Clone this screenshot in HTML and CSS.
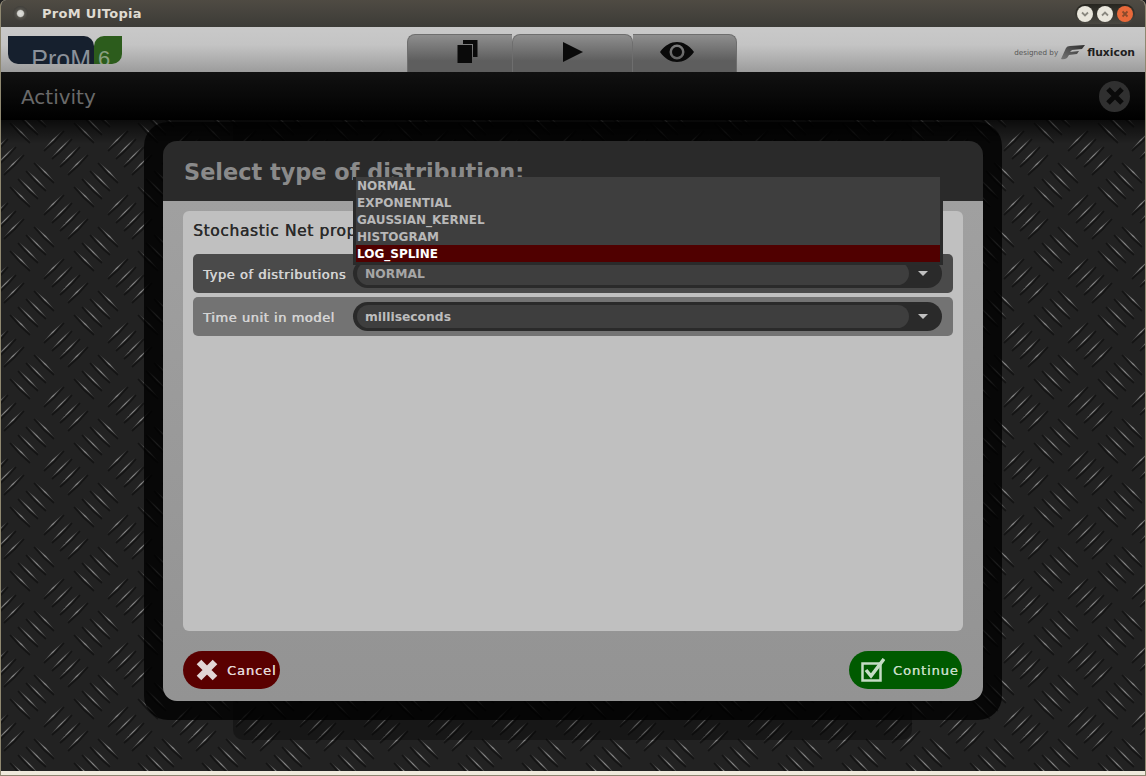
FILE: index.html
```html
<!DOCTYPE html>
<html lang="en">

<head>
    <meta charset="UTF-8">
    <meta name="viewport" content="width=device-width, initial-scale=1.0">
    <title>ProM UITopia</title>
    <link rel="stylesheet" href="styles.css">
</head>

<body>
    <div class="window">
        <header class="titlebar">
            <div class="title-left">
                <span class="app-dot"></span>
                <span class="app-title">ProM UITopia</span>
            </div>
            <div class="win-buttons">
                <span class="win-btn">
                    <svg width="10" height="10" viewBox="0 0 10 10"><path d="M2 3.500 5 6.500 8 3.500" fill="none" stroke="#8a887f" stroke-width="1.800"/></svg>
                </span>
                <span class="win-btn">
                    <svg width="10" height="10" viewBox="0 0 10 10"><path d="M2 6.500 5 3.500 8 6.500" fill="none" stroke="#8a887f" stroke-width="1.800"/></svg>
                </span>
                <span class="win-btn win-close">
                    <svg width="10" height="10" viewBox="0 0 10 10"><path d="M2.500 2.500 7.500 7.500M7.500 2.500 2.500 7.500" fill="none" stroke="#8a4a2c" stroke-width="1.800"/></svg>
                </span>
            </div>
        </header>

        <div class="toolbar">
            <div class="logo">
                <div class="logo-prom"><span>ProM</span></div>
                <div class="logo-six"><span>6</span></div>
            </div>
            <div class="tabs">
                <div class="tab tab-first">
                    <svg width="21" height="23" viewBox="0 0 21 23"><path d="M6 0H20.500V17H16V4H6Z" fill="#0a0a0a"/><path d="M0.500 5H15V23H0.500Z" fill="#0a0a0a"/></svg>
                </div>
                <div class="tab tab-mid">
                    <svg width="22" height="22" viewBox="0 0 22 22"><path d="M1 1 21 11 1 21Z" fill="#0a0a0a"/></svg>
                </div>
                <div class="tab tab-last">
                    <svg width="36" height="22" viewBox="0 0 36 22"><path fill-rule="evenodd" d="M1 11C6 4 12 1 18 1S30 4 35 11C30 18 24 21 18 21S6 18 1 11ZM18 3.500A7.500 7.500 0 1 0 18 18.500 7.500 7.500 0 1 0 18 3.500Z" fill="#0a0a0a"/><circle cx="18" cy="11" r="5" fill="#0a0a0a"/></svg>
                </div>
            </div>
            <div class="brand">
                <span class="brand-by">designed by</span>
                <svg width="24" height="15" viewBox="0 0 24 15">
                    <defs>
                        <linearGradient id="wing" x1="0" y1="1" x2="1" y2="0">
                            <stop offset="0" stop-color="#777"/>
                            <stop offset="1" stop-color="#2c2c2c"/>
                        </linearGradient>
                    </defs>
                    <path d="M0 14 5 3Q6 1 9 1L24 0 21 4 11 5 9 7 18 6 16 9 8 10 6 13Q3 15 0 14Z" fill="url(#wing)"/>
                </svg>
                <span class="brand-name">fluxicon</span>
            </div>
        </div>

        <div class="activity-bar">
            <span class="activity-title">Activity</span>
            <span class="activity-close">
                <svg width="20" height="20" viewBox="0 0 20 20"><path d="M3 3 17 17M17 3 3 17" stroke="#0a0a0a" stroke-width="5"/></svg>
            </span>
        </div>

        <main class="stage">
            <svg class="plate" width="100%" height="100%">
                <defs>
                    <linearGradient id="rib-light" x1="0" y1="1" x2="1" y2="0">
                        <stop offset="0" stop-color="#303030"/>
                        <stop offset="0.5" stop-color="#8c8c8c"/>
                        <stop offset="1" stop-color="#303030"/>
                    </linearGradient>
                    <g id="rib">
                        <path d="M-9 11Q2 2 11-9" fill="none" stroke="#0e0e0e" stroke-width="1.800" opacity="0.7"/>
                        <path d="M-10 10Q0.900 0.900 10-10Q-0.900-0.900-10 10" fill="url(#rib-light)"/>
                    </g>
                    <g id="ribs">
                        <use href="#rib" x="-12" y="-12"/>
                        <use href="#rib" x="-4" y="-4"/>
                        <use href="#rib" x="4" y="4"/>
                        <use href="#rib" x="12" y="12"/>
                    </g>
                    <pattern id="plate-tile" width="64" height="64" patternUnits="userSpaceOnUse">
                        <use href="#ribs" x="64" y="32"/>
                        <use href="#ribs" x="0" y="32"/>
                        <use href="#ribs" x="32" y="0" transform="rotate(90 32 0)"/>
                        <use href="#ribs" x="32" y="64" transform="rotate(90 32 64)"/>
                    </pattern>
                </defs>
                <rect width="100%" height="100%" fill="url(#plate-tile)"/>
            </svg>
            <div class="plate-shade"></div>
            <div class="sheet"></div>

            <div class="frame">
                <section class="dialog">
                    <h1 class="dialog-title">Select type of distribution:</h1>
                    <div class="dialog-body">
                        <div class="panel">
                            <div class="panel-title">Stochastic Net properties</div>
                            <div class="row row-dark">
                                <label class="row-label">Type of distributions</label>
                                <div class="combo">
                                    <div class="combo-value combo-muted">NORMAL</div>
                                    <span class="combo-arrow"></span>
                                </div>
                            </div>
                            <div class="row row-mid">
                                <label class="row-label">Time unit in model</label>
                                <div class="combo">
                                    <div class="combo-value">milliseconds</div>
                                    <span class="combo-arrow"></span>
                                </div>
                            </div>
                        </div>
                        <div class="actions">
                            <button class="btn btn-cancel">
                                <svg width="24" height="24" viewBox="0 0 24 24"><path d="M4 4 20 20M20 4 4 20" stroke="#e2d6d6" stroke-width="6.500"/></svg>
                                Cancel
                            </button>
                            <button class="btn btn-continue">
                                <svg width="24" height="24" viewBox="0 0 24 24"><path d="M1.500 5.500H19.500V22.500H1.500Z" fill="none" stroke="#c4dcc4" stroke-width="2.500"/><path d="M5 12 10 18 23 1" fill="none" stroke="#c4dcc4" stroke-width="3.500"/></svg>
                                Continue
                            </button>
                        </div>
                    </div>
                </section>
            </div>

            <ul class="popup">
                <li>NORMAL</li>
                <li>EXPONENTIAL</li>
                <li>GAUSSIAN_KERNEL</li>
                <li>HISTOGRAM</li>
                <li class="selected">LOG_SPLINE</li>
            </ul>
        </main>
    </div>
</body>

</html>
```

FILE: styles.css
```css
* {
    margin: 0;
    padding: 0;
    box-sizing: border-box;
}

body {
    background: #1e1e1e;
    font-family: "DejaVu Sans", sans-serif;
}

.window {
    width: 1146px;
    height: 776px;
    display: flex;
    flex-direction: column;
    overflow: hidden;
    border-radius: 6px 6px 0 0;
    border-left: 1px solid #8f8870;
    border-right: 1px solid #8f8870;
    border-bottom: 1px solid #8c8470;
    background: #efe9dc;
    padding-bottom: 4px;
}

/* window title */
.titlebar {
    height: 27px;
    flex: none;
    display: flex;
    align-items: center;
    justify-content: space-between;
    padding: 0 10px 0 12px;
    background: linear-gradient(#4f4b43, #3c3b37);
}

.title-left {
    display: flex;
    align-items: center;
    gap: 14px;
}

.app-dot {
    width: 15px;
    height: 15px;
    border-radius: 50%;
    background: radial-gradient(circle, #e0e0dc 0, #d0d0cc 28%, #55534d 40%, #2c2b28 100%);
}

.app-title {
    color: #dfdbd2;
    font-size: 13px;
    font-weight: bold;
    letter-spacing: 0.3px;
}

.win-buttons {
    display: flex;
    gap: 4px;
    padding: 2px;
    border-radius: 10px;
    background: linear-gradient(#26251f, #4a4842);
}

.win-btn {
    width: 16px;
    height: 16px;
    border-radius: 50%;
    display: flex;
    align-items: center;
    justify-content: center;
    background: #e9e6dc;
}

.win-close {
    background: #e8693a;
}

/* toolbar */
.toolbar {
    height: 45px;
    flex: none;
    display: flex;
    padding: 9px 10px 0 7px;
    background: linear-gradient(#c9c9c9, #c4c4c4 40%, #9c9c9c);
}

.logo {
    display: flex;
    height: 28px;
}

.logo-prom {
    width: 86px;
    background: #16202e;
    border-radius: 0 10px 0 10px;
    overflow: hidden;
    text-align: right;
    padding-right: 3px;
}

.logo-prom span {
    display: block;
    color: #8b919a;
    font-family: "Liberation Sans", sans-serif;
    font-size: 25px;
    line-height: 28px;
    padding-top: 9px;
}

.logo-six {
    width: 28px;
    background: #2c5c1c;
    border-radius: 10px 0 10px 0;
    overflow: hidden;
    padding-left: 4px;
}

.logo-six span {
    display: block;
    color: #8aa080;
    font-family: "Liberation Sans", sans-serif;
    font-size: 22px;
    line-height: 28px;
    padding-top: 9px;
}

.tabs {
    display: flex;
    height: 38px;
    margin-top: -2px;
    margin-left: 285px;
}

.tab {
    display: flex;
    align-items: center;
    justify-content: center;
    padding-bottom: 4px;
    height: 38px;
    border: 1px solid #6e6e6e;
    border-bottom: none;
    background: linear-gradient(#8e8e8e, #5e5e5e 70%);
}

.tab-first {
    width: 105px;
    border-radius: 8px 0 0 0;
    border-right: none;
    padding-left: 14px;
}

.tab-mid {
    width: 121px;
    border-radius: 8px 8px 0 0;
}

.tab-last {
    width: 104px;
    border-radius: 0 8px 0 0;
    border-left: none;
    padding-right: 16px;
}

.brand {
    display: flex;
    align-items: center;
    height: 32px;
    gap: 2px;
    margin-left: auto;
}

.brand-by {
    color: #555;
    font-size: 7.200px;
    margin-right: 1px;
}

.brand-name {
    color: #1e1e1e;
    font-size: 10.800px;
    font-weight: bold;
}

/* activity header */
.activity-bar {
    height: 48px;
    flex: none;
    display: flex;
    align-items: center;
    justify-content: space-between;
    padding: 0 15px 0 20px;
    background: linear-gradient(#111, #000);
}

.activity-title {
    color: #6a6a6a;
    font-size: 20px;
    padding-top: 2px;
}

.activity-close {
    width: 31px;
    height: 31px;
    border-radius: 50%;
    display: flex;
    align-items: center;
    justify-content: center;
    background: #303030;
}

/* main area */
.stage {
    flex: 1;
    position: relative;
    display: flex;
    justify-content: center;
    align-items: flex-start;
    padding-top: 2px;
    background: #222;
}

.plate {
    position: absolute;
    left: 0;
    top: 0;
}

.plate-shade {
    position: absolute;
    left: 0;
    right: 0;
    top: 0;
    height: 24px;
    background: linear-gradient(rgba(0, 0, 0, 0.65), rgba(0, 0, 0, 0));
}

.sheet {
    position: absolute;
    left: 232px;
    top: 0;
    width: 679px;
    height: 620px;
    border-radius: 0 0 10px 10px;
    background: rgba(0, 0, 0, 0.3);
}

.frame {
    position: relative;
    width: 858px;
    height: 598px;
    padding: 19px;
    border-radius: 24px;
    background: rgba(0, 0, 0, 0.78);
}

.dialog {
    height: 560px;
    display: flex;
    flex-direction: column;
    border-radius: 14px;
    overflow: hidden;
}

.dialog-title {
    height: 60px;
    flex: none;
    padding: 15px 21px 0;
    background: #2a2a2a;
    color: #8a8a8a;
    font-size: 22.400px;
    font-weight: bold;
    line-height: 32px;
}

.dialog-body {
    flex: 1;
    display: flex;
    flex-direction: column;
    padding: 10px 20px 12px;
    background: linear-gradient(#a0a0a0, #939393);
}

.panel {
    height: 420px;
    flex: none;
    padding: 11px 10px 0;
    border-radius: 6px;
    background: #c0c0c0;
}

.panel-title {
    color: #2a2a2a;
    font-size: 15.500px;
    line-height: 18px;
    letter-spacing: 0.6px;
    text-shadow: 0.4px 0 0 #2a2a2a;
    margin-bottom: 14px;
}

.row {
    height: 39px;
    display: flex;
    align-items: center;
    margin-bottom: 4px;
    padding: 0 11px 0 10px;
    border-radius: 5px;
}

.row-dark {
    background: #4a4a4a;
}

.row-mid {
    background: #737373;
}

.row-label {
    width: 150px;
    flex: none;
    color: #d4d4d4;
    font-size: 13px;
    letter-spacing: 0.55px;
    text-shadow: 0.6px 0 0 #d4d4d4;
    padding-top: 1px;
    white-space: nowrap;
}

.combo {
    flex: 1;
    height: 29px;
    display: flex;
    align-items: center;
    padding: 3px 0 3px 4px;
    border-radius: 15px;
    background: #2a2a2a;
}

.combo-value {
    width: 552px;
    height: 23px;
    flex: none;
    padding-left: 8px;
    border-radius: 12px;
    background: #3e3e3e;
    color: #bdbdbd;
    font-size: 12.300px;
    font-weight: bold;
    line-height: 25px;
}

.combo-muted {
    color: #a6a6a6;
}

.combo-arrow {
    width: 0;
    height: 0;
    margin-left: 9px;
    border-left: 5px solid transparent;
    border-right: 5px solid transparent;
    border-top: 5px solid #c0c0c0;
}

.actions {
    flex: 1;
    display: flex;
    justify-content: space-between;
    align-items: flex-end;
    padding-right: 1px;
}

.btn {
    height: 38px;
    display: flex;
    align-items: center;
    border: none;
    border-radius: 19px;
    font-family: "DejaVu Sans", sans-serif;
    font-size: 13px;
    letter-spacing: 0.9px;
    text-shadow: 0.3px 0 0 currentColor;
}

.btn-cancel {
    width: 97px;
    gap: 8px;
    padding-left: 12px;
    background: #5a0000;
    color: #e2d6d6;
}

.btn-continue {
    width: 113px;
    gap: 8px;
    padding-left: 12px;
    background: #005a00;
    color: #c4dcc4;
}

/* dropdown open over the form */
.popup {
    position: absolute;
    left: 352px;
    top: 57px;
    width: 590px;
    list-style: none;
    border: 3px solid #2a2a2a;
    border-top: none;
    background: #3e3e3e;
}

.popup li {
    height: 17px;
    padding-left: 1px;
    color: #b8b8b8;
    font-size: 12px;
    font-weight: bold;
    line-height: 19px;
}

.popup .selected {
    background: #500000;
    color: #fff;
}
```
